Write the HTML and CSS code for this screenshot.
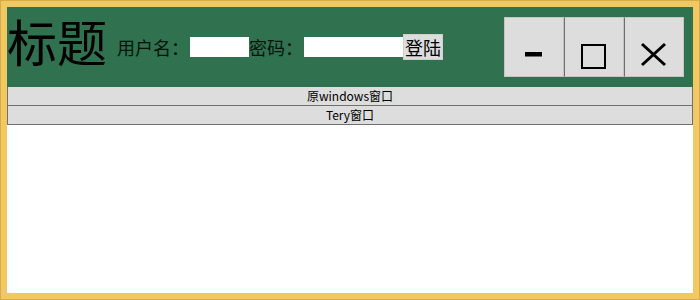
FILE: index.html
```html
<!DOCTYPE html>
<html>
<head>
<meta charset="utf-8">
<link rel="stylesheet" href="styles.css">
</head>
<body>
<div class="frame">
  <div class="window">
    <div class="header">
      <div class="title">标题</div>
      <span class="label label-user">用户名：</span>
      <input class="field field-user" type="text">
      <span class="label">密码：</span>
      <input class="field field-pass" type="password">
      <button class="login">登陆</button>
      <div class="spacer"></div>
      <div class="winbtns">
        <div class="winbtn">
          <svg width="58" height="58" viewBox="1 1 58 58"><rect x="21" y="35" width="17" height="4.5" fill="#000"/></svg>
        </div>
        <div class="winbtn sep">
          <svg width="58" height="58" viewBox="1 1 58 58"><rect x="18" y="28" width="23" height="23" fill="none" stroke="#000" stroke-width="2"/></svg>
        </div>
        <div class="winbtn sep">
          <svg width="58" height="58" viewBox="1 1 58 58"><path d="M18 27 L41 48 M41 27 L18 48" stroke="#000" stroke-width="3" fill="none"/></svg>
        </div>
      </div>
    </div>
    <div class="bar">原windows窗口</div>
    <div class="bar">Tery窗口</div>
  </div>
</div>
</body>
</html>
```

FILE: styles.css
```css
html, body {
  margin: 0;
  padding: 0;
  background: #ffffff;
}
.frame {
  width: 700px;
  height: 300px;
  box-sizing: border-box;
  border: 1px solid #d7ab47;
  background: #f1c862;
  padding: 6px;
}
.window {
  width: 100%;
  height: 100%;
  background: #ffffff;
  font-family: "Noto Sans CJK SC", "Noto Sans", sans-serif;
  color: #000;
}
.header {
  height: 80px;
  background: #30714f;
  display: flex;
  align-items: center;
}
.title {
  font-size: 50px;
  line-height: 50px;
  margin-left: 0;
  margin-bottom: 14px;
  margin-right: 10px;
}
.label {
  font-size: 18px;
  line-height: 20px;
  color: #06140c;
}
.field {
  box-sizing: border-box;
  height: 20px;
  border: 1px solid #ffffff;
  background: #ffffff;
  padding: 0;
  margin: 0;
  outline: none;
}
.field-user {
  width: 59px;
  margin-left: 1px;
}
.field-pass {
  width: 99px;
  margin-left: 1px;
}
.login {
  box-sizing: border-box;
  width: 40px;
  height: 26px;
  padding: 0;
  margin: 0;
  border: 1px solid #cfcfcf;
  background: #dddddd;
  font-family: "Noto Sans CJK SC", sans-serif;
  font-size: 18px;
  line-height: 24px;
  color: #000;
}
.spacer {
  flex: 1;
}
.winbtns {
  display: flex;
  margin-right: 9px;
}
.winbtn {
  width: 60px;
  height: 60px;
  box-sizing: border-box;
  border: 1px solid #c4c4c4;
  background: #dddddd;
}
.winbtn svg {
  display: block;
}
.winbtn.sep {
  border-left: 1px solid #6e6e6e;
}
.bar {
  height: 19px;
  box-sizing: border-box;
  border: 1px solid #707070;
  border-top: none;
  background: #dddddd;
  text-align: center;
  font-size: 12px;
  line-height: 18px;
}
```
